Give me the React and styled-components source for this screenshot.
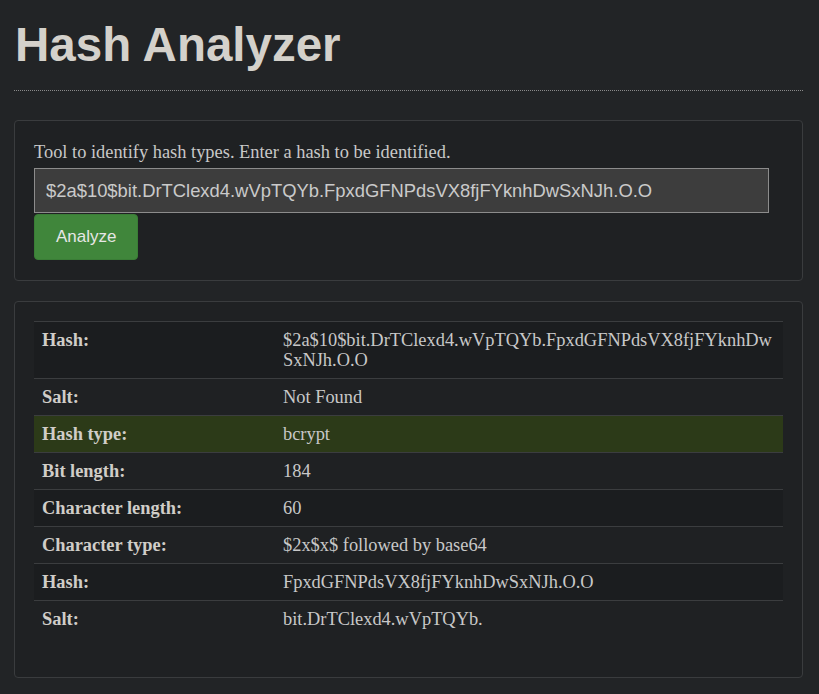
import React, { useState } from "react";
import styled, { createGlobalStyle } from "styled-components";

const GlobalStyle = createGlobalStyle`
  html, body {
    margin: 0;
    padding: 0;
    background-color: #222426;
    color: #c8c8c8;
    font-family: "Liberation Serif", "Times New Roman", serif;
  }
`;

const Page = styled.div`
  padding: 0 16px 20px 14px;
`;

const Header = styled.header`
  padding: 19px 0 19px;
  border-bottom: 1px dotted #8a8a8a;
  margin-bottom: 29px;
`;

const Title = styled.h1`
  margin: 0 0 0 1px;
  font-family: "Liberation Sans", Arial, sans-serif;
  font-size: 47.5px;
  line-height: 52px;
  font-weight: 700;
  color: #d4d1cb;
`;

const Panel = styled.section`
  background-color: #1f2123;
  border: 1px solid #3a3c3e;
  border-radius: 4px;
  padding: ${(p) => (p.$table ? "19px 19px 20px" : "20px 19px")};
  margin-bottom: 20px;
`;

const Intro = styled.p`
  margin: 0 0 5px;
  font-size: 18.4px;
  line-height: 22px;
`;

const HashInput = styled.input`
  display: block;
  box-sizing: border-box;
  width: 735px;
  height: 45px;
  padding: 0 11px;
  background-color: #3d3d3d;
  border: 1px solid #8c8c8c;
  color: #cacaca;
  font-family: "Liberation Sans", Arial, sans-serif;
  font-size: 18.4px;
  outline: none;
`;

const Button = styled.button`
  display: block;
  margin-top: 1px;
  height: 46px;
  padding: 0 21px;
  background-color: #40863b;
  border: 1px solid #3a7d36;
  border-radius: 4px;
  color: #e6e6e6;
  font-family: "Liberation Sans", Arial, sans-serif;
  font-size: 17px;
  cursor: pointer;
`;

const Table = styled.table`
  width: 100%;
  table-layout: fixed;
  border-collapse: collapse;
  margin-bottom: 20px;
  font-size: 18.4px;
  line-height: 20px;
`;

const Row = styled.tr`
  background-color: ${(p) =>
    p.$highlight ? "#2c3a18" : p.$odd ? "#1b1d1f" : "transparent"};
`;

const Label = styled.th`
  width: 225px;
  text-align: left;
  font-weight: 700;
  padding: 8px;
  border-top: 1px solid #3b3d3f;
  vertical-align: top;
  color: #d0cdc8;
`;

const Value = styled.td`
  padding: 8px;
  border-top: 1px solid #3b3d3f;
  vertical-align: top;
  word-break: break-all;
`;

const rows = [
  { label: "Hash:", value: "$2a$10$bit.DrTClexd4.wVpTQYb.FpxdGFNPdsVX8fjFYknhDwSxNJh.O.O" },
  { label: "Salt:", value: "Not Found" },
  { label: "Hash type:", value: "bcrypt", highlight: true },
  { label: "Bit length:", value: "184" },
  { label: "Character length:", value: "60" },
  { label: "Character type:", value: "$2x$x$ followed by base64" },
  { label: "Hash:", value: "FpxdGFNPdsVX8fjFYknhDwSxNJh.O.O" },
  { label: "Salt:", value: "bit.DrTClexd4.wVpTQYb." },
];

export default function App() {
  const [hash, setHash] = useState(
    "$2a$10$bit.DrTClexd4.wVpTQYb.FpxdGFNPdsVX8fjFYknhDwSxNJh.O.O"
  );

  return (
    <Page>
      <GlobalStyle />
      <Header>
        <Title>Hash Analyzer</Title>
      </Header>

      <Panel>
        <Intro>Tool to identify hash types. Enter a hash to be identified.</Intro>
        <HashInput value={hash} onChange={(e) => setHash(e.target.value)} />
        <Button>Analyze</Button>
      </Panel>

      <Panel $table>
        <Table>
          <tbody>
            {rows.map((r, i) => (
              <Row key={i} $odd={i % 2 === 0} $highlight={r.highlight}>
                <Label>{r.label}</Label>
                <Value>{r.value}</Value>
              </Row>
            ))}
          </tbody>
        </Table>
      </Panel>
    </Page>
  );
}
